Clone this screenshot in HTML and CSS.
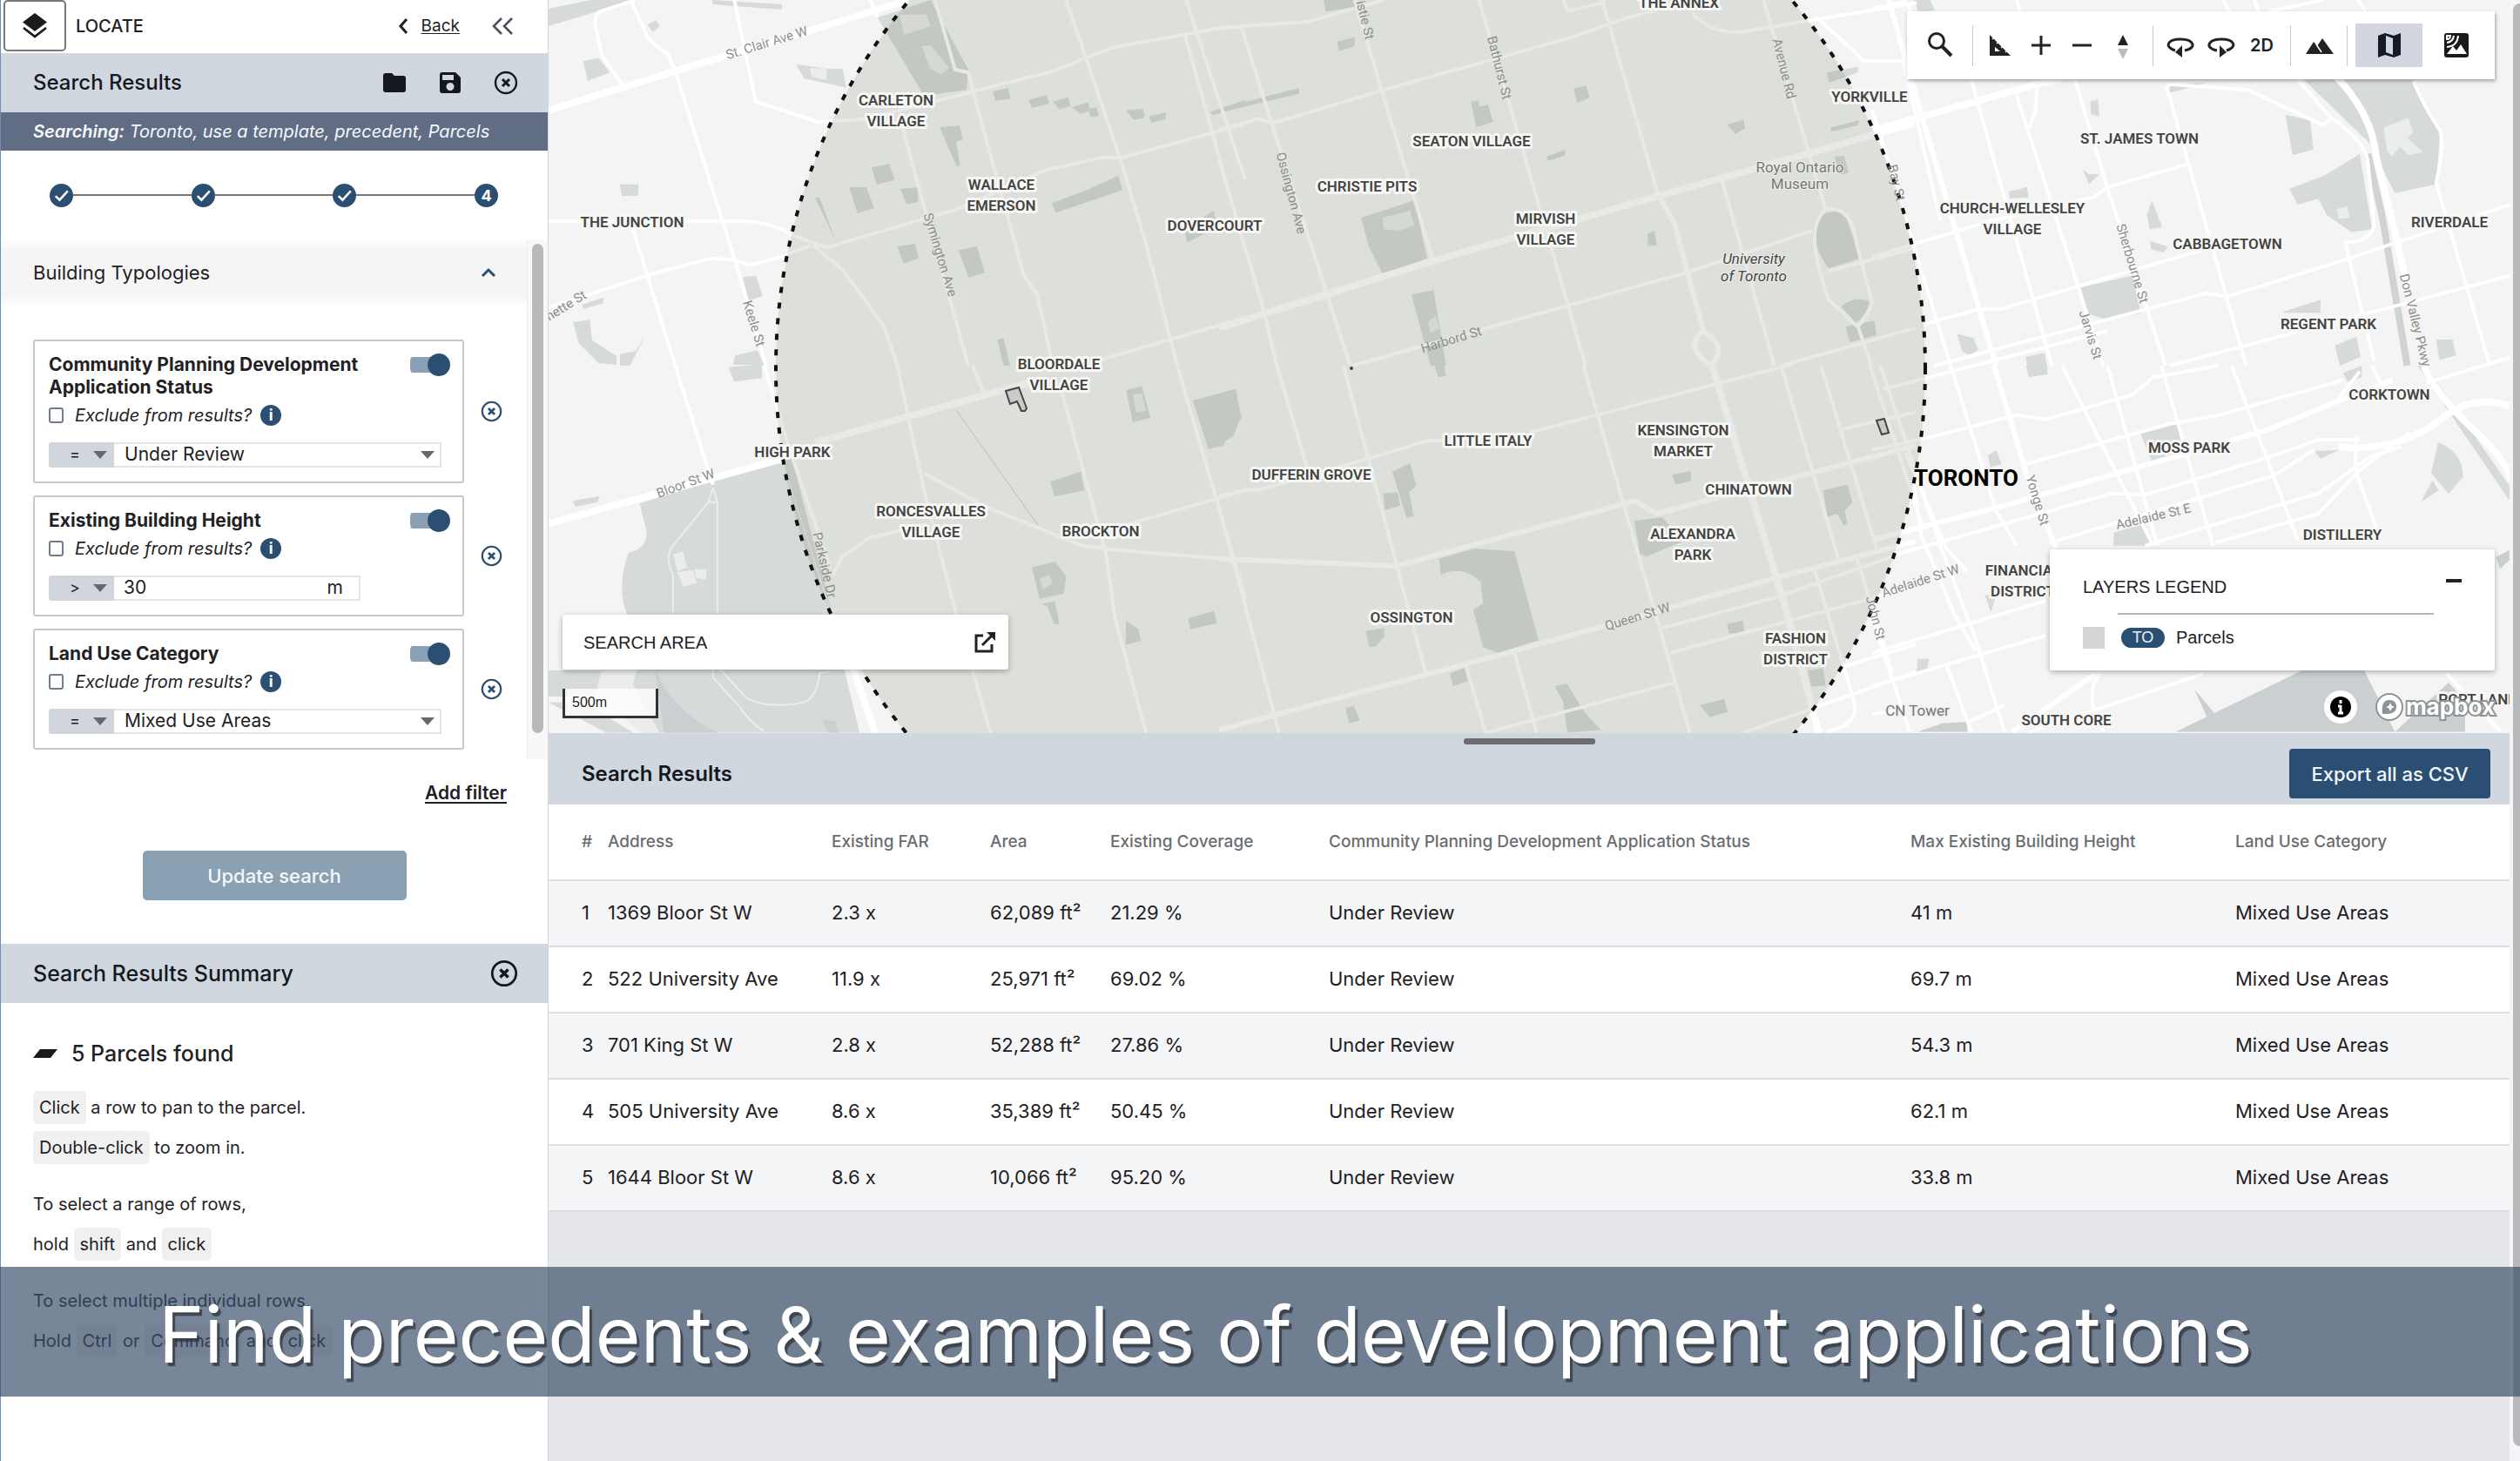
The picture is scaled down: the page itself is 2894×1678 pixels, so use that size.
FILE: index.html
```html
<!DOCTYPE html>
<html lang="en">
<head>
<meta charset="utf-8">
<title>Locate – Search Results</title>
<link rel="stylesheet" href="styles.css">
</head>
<body>
<svg class="defs" aria-hidden="true">
  <symbol id="close" viewBox="0 0 28 28"><circle cx="14" cy="14" r="12" fill="none" stroke="currentColor" stroke-width="2.4"/><path d="M10 10l8 8M18 10l-8 8" stroke="currentColor" stroke-width="3" fill="none"/></symbol>
  <symbol id="check" viewBox="0 0 26 26"><path d="M6.500 13.500l4.500 4.500 9-10" fill="none" stroke="#fff" stroke-width="2.400"/></symbol>
</svg>
<div class="app">
  <aside class="sidebar">
    <header class="brand">
      <button class="logo" aria-label="Layers"><svg viewBox="0 0 28 30"><path d="M14 0L28 10.500 14 21 0 10.500z" fill="#1b1b1b"/><path d="M1 17l13 10 13-10" fill="none" stroke="#1b1b1b" stroke-width="2.800"/></svg></button>
      <span class="brand-name">LOCATE</span>
      <a class="back" href="#back"><svg viewBox="0 0 12 20"><path d="M10 2L3 10l7 8" fill="none" stroke="#222" stroke-width="3"/></svg><span>Back</span></a>
      <button class="plain collapse" aria-label="Collapse panel"><svg viewBox="0 0 26 20"><path d="M11 1L2 10l9 9M23 1l-9 9 9 9" fill="none" stroke="#4a5260" stroke-width="2.600"/></svg></button>
    </header>
    <div class="bar">
      <h1 class="heading">Search Results</h1>
      <button class="plain" aria-label="Open folder"><svg class="i28" viewBox="0 0 28 28"><path d="M1 6q0-3 3-3h7l3 3h10q3 0 3 3v13q0 3-3 3H4q-3 0-3-3z" fill="#14171c"/></svg></button>
      <button class="plain" aria-label="Save search"><svg class="i28" viewBox="0 0 28 28"><path d="M2 5q0-3 3-3h15l6 6v15q0 3-3 3H5q-3 0-3-3zM5 5v6h13V5zM14 14a4.500 4.500 0 1 0 .01 0z" fill="#14171c" fill-rule="evenodd"/></svg></button>
      <button class="plain" aria-label="Close search"><svg class="i28"><use href="#close"/></svg></button>
    </div>
    <p class="searching"><strong>Searching:</strong> Toronto, use a template, precedent, Parcels</p>
    <ol class="steps">
      <li><svg><use href="#check"/></svg></li>
      <li><svg><use href="#check"/></svg></li>
      <li><svg><use href="#check"/></svg></li>
      <li>4</li>
    </ol>
    <div class="scroller">
      <div class="scroll-body">
        <button class="section"><span>Building Typologies</span><svg viewBox="0 0 18 12"><path d="M2 10l7-7 7 7" fill="none" stroke="#2b4f72" stroke-width="3"/></svg></button>
        <div class="filters">
          <div class="filter">
            <fieldset class="card">
              <div class="card-head"><h2>Community Planning Development Application Status</h2><input class="toggle" type="checkbox" role="switch" checked aria-label="Status filter on"></div>
              <div class="exclude"><input type="checkbox" id="ex1"><label for="ex1">Exclude from results?</label><span class="info">i</span></div>
              <div class="criteria"><span class="pick op"><select aria-label="Status operator"><option>=</option></select></span><span class="pick value"><select aria-label="Status"><option>Under Review</option></select></span></div>
            </fieldset>
            <button class="plain remove" aria-label="Remove status filter"><svg><use href="#close"/></svg></button>
          </div>
          <div class="filter">
            <fieldset class="card">
              <div class="card-head"><h2>Existing Building Height</h2><input class="toggle" type="checkbox" role="switch" checked aria-label="Height filter on"></div>
              <div class="exclude"><input type="checkbox" id="ex2"><label for="ex2">Exclude from results?</label><span class="info">i</span></div>
              <div class="criteria short"><span class="pick op"><select aria-label="Height operator"><option>&gt;</option></select></span><span class="number"><input type="text" value="30" id="height" aria-label="Height"><label for="height">m</label></span></div>
            </fieldset>
            <button class="plain remove" aria-label="Remove height filter"><svg><use href="#close"/></svg></button>
          </div>
          <div class="filter">
            <fieldset class="card">
              <div class="card-head"><h2>Land Use Category</h2><input class="toggle" type="checkbox" role="switch" checked aria-label="Land use filter on"></div>
              <div class="exclude"><input type="checkbox" id="ex3"><label for="ex3">Exclude from results?</label><span class="info">i</span></div>
              <div class="criteria"><span class="pick op"><select aria-label="Land use operator"><option>=</option></select></span><span class="pick value"><select aria-label="Land use"><option>Mixed Use Areas</option></select></span></div>
            </fieldset>
            <button class="plain remove" aria-label="Remove land use filter"><svg><use href="#close"/></svg></button>
          </div>
        </div>
      </div>
      <div class="track"><div class="thumb"></div></div>
    </div>
    <div class="actions">
      <a class="add" href="#add">Add filter</a>
      <button class="update">Update search</button>
    </div>
    <div class="bar">
      <h2 class="heading summary-title">Search Results Summary</h2>
      <button class="plain" aria-label="Close summary"><svg class="i32"><use href="#close"/></svg></button>
    </div>
    <section class="summary">
      <p class="found"><svg viewBox="0 0 28 10"><path d="M8 0h20l-8 10H0z" fill="#1b1b1b"/></svg>5 Parcels found</p>
      <p><kbd>Click</kbd> a row to pan to the parcel.<br><kbd>Double-click</kbd> to zoom in.</p>
      <p>To select a range of rows,<br>hold <kbd>shift</kbd> and <kbd>click</kbd></p>
      <p>To select multiple individual rows,<br>Hold <kbd>Ctrl</kbd> or <kbd>Command</kbd> and <kbd>click</kbd></p>
    </section>
  </aside>

  <main class="main">
    <section class="map" aria-label="Map">
      <svg class="canvas" viewBox="630 0 2252 842" preserveAspectRatio="xMidYMid slice">
        <rect x="0" y="-600" width="3600" height="2200" class="land"/>
        <!-- parks and water -->
        <g transform="translate(630 0) scale(.5102 .3333)" class="park">
          <path d="M0 30L95 0h100L0 90z M368 0l157 15v18l-155-18z M222 85l20-15 8 20-15 20z M78 210l35-10 25 50-50 28z M557 222l75 15 30 0 8 65-95-32z M160 635h42v40h-37z M75 1050l48-25v20l-45 20z M55 1110l38-8 5 70 55 55 0 30-40-5-45-70z M218 1155l-35 105h-22v-40l35-10z M437 955l30-5 15 70-32 15z M420 1225l50-18 15 50-70 0z"/>
          <path d="M740 60L860 0l85 240-5 70-95 20z M1000 315l35-12 4 38-33 6z M1080 345l40-18 8 30-40 15z M1135 350l35-15 5 30-25 12z M1178 370l36-18 6 28-22 12z M1215 375l18-5 5 30-18 3z M1300 380l38-5 4 30-25 8z M1352 400l38-12-2 22-32 14z M880 438l45-5 8 48-15 8 8 80-8 3z M727 577l40-12 12 55-40 16z M677 645h38l18 72-38 18z M792 650l38-4 2 50-26 8z M600 682l10-2 35 145z M785 850l40-10 8 50-34 18z M922 862l42-14 18 92-36 16z M1132 700l80-45 70-50 10 50-150 78z M1430 790l68-65 5 60-65 50z M1490 385l78-40v20l-72 32z M1010 1170l14-5 15 95h-15z"/>
          <path class="clearing" d="M790 50l60 0 10 40-60 30z M840 160l20-5 42 80-18 22-25-20z M588 235h38v40l-34-10z"/>
        </g>
        <g transform="translate(1400 0) scale(.5102 .3333)" class="park">
          <path d="M235 0h70v25l-65 15z M265 143l40-15v32l-35 16z M0 375l180-72v20L0 388z M567 350l18-4v22l20-8 12 60-38 18z M798 305l28-10 8 42-28 18z M737 540l42-24v20l-38 18z M1144 430l36-18 4 30-22 20z M1376 440l65-26-3 18-60 22z M1368 250l70-20v20l-65 35z M1385 540l22-4 10 60-18 5z M320 750l120-60 28 200-100 55-32-100z M433 1015l50-16 28 261h-35z M965 805l15-10 5 50-20 2z M1345 760q30-50 65-20l32 150-70 35q-40-80-27-165z M1400 1055q35-40 65-15-10 50-32 72z M1410 1125l65-20 5 50-60 25z"/>
          <path class="clearing" d="M368 750l62-25 10 50-30 20-40-5z M470 1110l18-25 8 50-20 10z"/>
        </g>
        <g transform="translate(2150 0) scale(.4745 .3333)" class="park">
          <path d="M100 0h40l12 35-40 5z M720 290l90-5-90 35z M1045 275h265l65 180-10 180-100 30-60-170z M1000 395l60 20 8 100-50 20z M1010 650l85-45 85-75 30 260-50 10-60-60-20-55-50 20z M528 350l18-8 4 60-20-8z M510 585l15 15 25 0-25 35z M665 740l12-48 25 90-30 8z M672 830l44 20-10 20-30-10z M505 990l125-40 20 130-85 20-45-20z M995 1075l90-42v45h-88z M1120 1190l52-30 10 70-50 30z M1365 1170l40 0 8 55-40 15z M205 1150l40 15 12 40-20 18-18-10z M330 660l45-15 3 35-45 4z M372 1230l45-14 6 44h-48z"/>
          <path class="clearing" d="M1238 440l60-35 12 50-15 20 38 50-35 10-20-30-20 35-12-20z M1125 720l25-10 5 40-25 5z"/>
          <path class="rail" d="M1200 530l35 220 60 510"/>
        </g>
        <g transform="translate(630 420) scale(.5102 .3333)" class="park">
          <path d="M405 5l75-10v48l-62 12z M55 465l60-15-5 20-50 16z M205 475l320-150 110 530L700 1265H210L180 1050l0-180q-30-100 0-225 50-20 38-90z M0 1050h215v90H0z M0 1160h80l110 105h-60z"/>
          <path d="M527 330l20-15 95 560z M1300 85l35-15 20 110-40 15z M1450 120l95-40 15 100-35 60-5 35-35 12z M1130 400l68-35 8 65-68 20z M1088 695l52-20 25 50-5 60-55 18z M1110 820l30-8 10 78-12 0-15-60z M1300 878l28 30 5 40-34 15z M1440 870l58-25 6 42-60 22z"/>
          <path class="water" d="M240 1050q40 140 140 215H260z M615 1220l30 5 10 40h-25z"/>
          <path class="clearing" d="M120 1040h80l-10 60 60 165h-40L105 1140z M280 650l22-10 10 55-22 12z M290 712l35-8 8 45-30 12z M328 702l28 0-2 35-22-5z M1315 100l20-5 10 60-22 8z M1105 735l22-15 8 30-22 22z"/>
        </g>
        <g transform="translate(1400 420) scale(.5102 .3333)" class="park">
          <path d="M0 100l38-20 10 100-15 60-33 35z M485 0h22l4 35-18 5z M390 365l40-30 14 80-16 20 10 85-16 5-22-110z M370 440l32-4 6 46-35 15z M495 665l80-35 90 10 54 305-90 45-35-20-22-130 22-20-5-75q-40-60-90-25z M1020 375l42-12v35l-35 12z M935 535l62-12 50 80-85 55-15-10z M1360 430l54-20 12 60-18 30 6 45-8 5-15-40-22 12z M1143 890l36-12 4 40-35 5z M1325 1050l35-8 5 60-32 4z M330 915l42-12v30l-20 35-14 0z M520 1060l32-18 8 45-34 18z M285 1180l18-8 14 50-24 10z M755 1105l28-10 40 100 36 60-75 10-10-110z M1082 1170l55-22 8 45-40 18z"/>
        </g>
        <g transform="translate(2150 420) scale(.4745 .3333)" class="park">
          <path d="M372 0h52v30l-45 10z M650 235l90-35 12 100-75 30z M585 575l75-30 14 75h-90z M1370 265q60 30 60 120l-35 55-42-70z M1328 470l28-75 15 35z M1140 25l45-25v40l-35 15z M1070 295l60-5-45 30z M280 310l20-20 14 50-28 10z M135 540l65-20v15l-60 25z M272 790l28 0-12 60z M110 1010l28 0-5 40-25 5z M1320 0h20l220 450-20 10z"/>
          <path class="water" d="M735 1262l310-215h145l75 215z M1265 1262l130-170 40 60v110z M780 1115l50 85-20 10z M110 1262l60-30 60-5v35z M1510 660l40-30v30l-30 40z"/>
        </g>
        <!-- streets -->
        <g transform="translate(630 0) scale(.5102 .3333)" class="road">
          <path class="wide" d="M0 380L285 245 590 105 810 0"/>
          <path d="M195 0l-80 40q-12 15-10 50l15 100 45 100M185 0l40 135 45 55 15 55L420 900l70 360M418 0l48 350 140 70 110-10 240-95 180-70 130-80 270-75M725 0l15 60M0 763h445q60 5 100 45l80 45 300-135 190-130 130-45h45l275-115M0 1060l230-115 135-55 50 5 40 18 70-28 65-40M190 790l95 470M595 845l70 90 90 190 30 135M795 430l55 310 95 520M870 0l45 240 30 10 20 120L1070 950l30 65 35 245M1165 0l120 540 60 300 70 420M1435 0l133 620M1432 120l136 740M1230 1245l338-150"/>
        </g>
        <g transform="translate(1400 0) scale(.5102 .3333)" class="road">
          <path class="wide" d="M0 1130l480-230L990 675l575-250"/>
          <path class="mid" d="M985 660l40 110 65 370q-45 55 15 120 45-60-15-120"/>
          <path d="M0 100l50-10 150-15L370 0M50 90l65 320 180 850M0 445l90-35 30 15L370 310 790 130l130-70L985 35M305 0l175 890M585 0l240 1260M775 0l10 38 85-30M862 0l125 665M1065 45q40 70 110 65l395-100M1225 0l140 720q60-10 70 120l35 200q-10 50-32 85l30 135M1345 60l80 110 25 40h118M1365 720q-40 60-15 200l20 110 70 100M0 550l95 490 35 220M300 1260l480-205 270-115 285-145M1130 610l120 650M1370 935l198-80M1265 1260l303-130"/>
        </g>
        <g transform="translate(2150 0) scale(.4745 .3333)" class="road">
          <path class="wide" d="M1120 260q90 130 100 280l50 290 25 160M0 450l400-160 60-20"/>
          <path class="mid" d="M40 0l80 400L300 1260"/>
          <path d="M0 30l80-25 20 50M0 210h75l90 550M350 0l10 50M0 380l190 880M240 275l195 985M350 330l210 930M400 290l-5 90-15 60M490 270l80 380 140 610M710 310l10-20 190 20 180 120 20-20M715 310l190 950M1030 275l80 130q90 90 90 160l15 200q0 70-70 70l10 60 60 350M1310 280q30 100 65 170 10 60-10 180l130 630M850 0l15 40M925 0l10 40M960 40l130-40M1175 0l20 40M0 885l290-125 245-80 35-35 195-80M130 1115l130-50h50l480-200 40-15M150 1260l660-250 50 12 290-130 420-200M720 1260l850-320"/>
        </g>
        <g transform="translate(630 420) scale(.5102 .3333)" class="road">
          <path class="wide" d="M0 545L245 440 530 320M600 265l210-90L1090 55M685 1040l50 225"/>
          <path d="M285 0l85 410M485 0l60 300 90 400M785 0l60 430 75 440 75 395M845 370l130 110 225 140 60 12 308 40M1150 60l105 590 20 220 70 395M955 0l25 95M1415 0l153 800M1250 570l318-140M640 720l20-60 60-65 130-50"/>
          <path class="thin" d="M370 420l-10 50-80 150q-20 40 0 100v130M370 420l10 50v380M360 470h20M385 1045l60 100q50 40 130 15 30-20 35-100l20-5M370 1045v30l60 100q20 50 55 85"/>
        </g>
        <g transform="translate(1400 420) scale(.5102 .3333)" class="road">
          <path class="wide" d="M1110 0l170 860 70 405"/>
          <path class="mid" d="M0 665l400 25 515-215 20-10 50 45 583-235M0 1255l660-270 585-250 323-130"/>
          <path d="M130 0l70 360M280 0l185 1060M820 0l240 1265M0 450l60-22h30l240-105 140-65h50M700 230l590-235M0 490l135 775M555 1030l45 235M665 990l50 275M1265 0l130 670M1355 0l125 630M1465 0l120 560M1400 220l168-60M1495 80l73-25M995 905l255-105 318-170M1015 990l553-230M600 1265l430-175M1180 1265l388-210M1340 700l90 460q10 80-60 100M1435 660l80 400M1400 1040l168-80"/>
        </g>
        <g transform="translate(2150 420) scale(.4745 .3333)" class="road">
          <path class="wide" d="M1335 0q30 100 120 220 100 130 100 220M1130 280q150 20 260-110 80-80 170-20"/>
          <path class="mid" d="M295 0l80 380 70 250M0 600l300-110 660-270 170-100 130-70M340 1262l200-200"/>
          <path d="M0 290l130-40 220-80 70 15 210-85 50-60L840 0M30 80l540-200M190 0l110 500 50 120M460 0l220 620M570 0l120 620M700 0l125 620M870 0l160 600M1210 0l40 120M20 0l150 640 80 300 70 320M80 300l100 330 50 80M370 340l350-140 120-30 300-120M60 650l520-210 80 5 300-130 120-60h100M430 610l540-230 100-90M660 620l420-180 130-130 70-30M830 610l250-100 100-150 120-130M1170 240v120l50 200M1180 20l-50 90M0 990l420-180M0 1105l420-175M180 1030l60 232M0 1200l50-10M230 1230l90-60M250 980l-50-120-80-270-20-180M0 870l90 390M550 1060q-40 80 10 200M380 1262l420-200M1390 1060l130 200M1340 60l230-100"/>
        </g>
        <!-- search radius -->
        <circle class="area" cx="1551" cy="423" r="660"/>
        <circle class="area-edge" cx="1551" cy="423" r="660"/>
        <g class="parcel"><path d="M1155 449l15-4 9 24-2 3-4 0-5-11-8 3z M2155 483l9-2 5 16-8 2z"/><circle cx="1552" cy="423" r="1"/></g>
        <path d="M1098 471l94 132" class="thinline"/>
        <g class="street">
          <text transform="translate(882 54) rotate(-17)">St. Clair Ave W</text>
          <text transform="translate(1075 294) rotate(73)">Symington Ave</text>
          <text transform="translate(861 373) rotate(73)">Keele St</text>
          <text transform="translate(645 360) rotate(-32)">Annette St</text>
          <text transform="translate(1560 13) rotate(76)">Christie St</text>
          <text transform="translate(1717 79) rotate(76)">Bathurst St</text>
          <text transform="translate(2044 80) rotate(76)">Avenue Rd</text>
          <text transform="translate(1478 223) rotate(75)">Ossington Ave</text>
          <text transform="translate(2173 211) rotate(76)">Bay St</text>
          <text transform="translate(1668 395) rotate(-17)">Harbord St</text>
          <text transform="translate(789 560) rotate(-20)">Bloor St W</text>
          <text transform="translate(942 650) rotate(77)">Parkside Dr</text>
          <text transform="translate(1882 713) rotate(-17)">Queen St W</text>
          <text transform="translate(2149 711) rotate(76)">John St</text>
          <text transform="translate(2207 672) rotate(-18)">Adelaide St W</text>
          <text transform="translate(2474 598) rotate(-13)">Adelaide St E</text>
          <text transform="translate(2335 576) rotate(73)">Yonge St</text>
          <text transform="translate(2396 386) rotate(73)">Jarvis St</text>
          <text transform="translate(2444 304) rotate(73)">Sherbourne St</text>
          <text transform="translate(2769 369) rotate(76)">Don Valley Pkwy</text>
        </g>
        <g class="place">
          <text x="1029" y="121">CARLETON<tspan x="1029" dy="24">VILLAGE</tspan></text>
          <text x="1150" y="218">WALLACE<tspan x="1150" dy="24">EMERSON</tspan></text>
          <text x="726" y="261">THE JUNCTION</text>
          <text x="1395" y="265">DOVERCOURT</text>
          <text x="1928" y="9">THE ANNEX</text>
          <text x="1690" y="168">SEATON VILLAGE</text>
          <text x="1570" y="220">CHRISTIE PITS</text>
          <text x="1775" y="257">MIRVISH<tspan x="1775" dy="24">VILLAGE</tspan></text>
          <text x="2147" y="117">YORKVILLE</text>
          <text x="2457" y="165">ST. JAMES TOWN</text>
          <text x="2311" y="245">CHURCH-WELLESLEY<tspan x="2311" dy="24">VILLAGE</tspan></text>
          <text x="2558" y="286">CABBAGETOWN</text>
          <text x="2813" y="261">RIVERDALE</text>
          <text x="2674" y="378">REGENT PARK</text>
          <text x="1216" y="424">BLOORDALE<tspan x="1216" dy="24">VILLAGE</tspan></text>
          <text x="910" y="525">HIGH PARK</text>
          <text x="1069" y="593">RONCESVALLES<tspan x="1069" dy="24">VILLAGE</tspan></text>
          <text x="1264" y="616">BROCKTON</text>
          <text x="1506" y="551">DUFFERIN GROVE</text>
          <text x="1709" y="512">LITTLE ITALY</text>
          <text x="1933" y="500">KENSINGTON<tspan x="1933" dy="24">MARKET</tspan></text>
          <text x="2008" y="568">CHINATOWN</text>
          <text x="1944" y="619">ALEXANDRA<tspan x="1944" dy="24">PARK</tspan></text>
          <text x="1621" y="715">OSSINGTON</text>
          <text x="2062" y="739">FASHION<tspan x="2062" dy="24">DISTRICT</tspan></text>
          <text x="2744" y="459">CORKTOWN</text>
          <text x="2514" y="520">MOSS PARK</text>
          <text x="2690" y="620">DISTILLERY</text>
          <text x="2323" y="661">FINANCIAL<tspan x="2323" dy="24">DISTRICT</tspan></text>
          <text x="2373" y="833">SOUTH CORE</text>
          <text x="2851" y="809">PORT LANDS</text>
        </g>
        <g class="poi">
          <text x="2067" y="198">Royal Ontario<tspan x="2067" dy="19">Museum</tspan></text>
          <text x="2202" y="822">CN Tower</text>
          <text class="campus" x="2014" y="303">University<tspan x="2014" dy="20">of Toronto</tspan></text>
        </g>
        <text class="city" x="2258" y="558">TORONTO</text>
      </svg>

      <div class="toolbar">
        <button class="tool first" aria-label="Search"><svg viewBox="0 0 32 32"><circle cx="12" cy="11" r="8.500" fill="none" stroke="#222" stroke-width="3"/><path d="M18 17l11 11" stroke="#222" stroke-width="4"/></svg></button>
        <div class="tools zooming">
          <button class="tool" aria-label="Measure"><svg viewBox="0 0 32 32"><path d="M4 4l24 24H4zM10 18v5h6z" fill="#222" fill-rule="evenodd"/><path d="M9 7l-2 2M14 12l-2 2M19 17l-2 2M24 22l-2 2" stroke="#fff" stroke-width="1.500"/></svg></button>
          <button class="tool" aria-label="Zoom in"><svg viewBox="0 0 32 32"><path d="M16 5v22M5 16h22" stroke="#222" stroke-width="3"/></svg></button>
          <button class="tool" aria-label="Zoom out"><svg viewBox="0 0 32 32"><path d="M5 16h22" stroke="#222" stroke-width="3"/></svg></button>
          <button class="tool" aria-label="Reset north"><svg viewBox="0 0 32 32"><path d="M10 16L16 4l6 12z" fill="#222"/><path d="M10 20l6 12 6-12z" fill="#bbb"/></svg></button>
        </div>
        <div class="tools">
          <button class="tool" aria-label="Rotate left"><svg viewBox="0 0 32 32"><path d="M10 22C-3 18 1 9 16 9s20 10 5 13" fill="none" stroke="#222" stroke-width="3"/><path d="M18 16v14l-8-6z" fill="#222"/></svg></button>
          <button class="tool" aria-label="Rotate right"><svg viewBox="0 0 32 32"><path d="M22 22C35 18 31 9 16 9s-20 10-5 13" fill="none" stroke="#222" stroke-width="3"/><path d="M14 16v14l8-6z" fill="#222"/></svg></button>
          <button class="tool">2D</button>
        </div>
        <button class="tool terrain" aria-label="Terrain"><svg viewBox="0 0 32 32"><path d="M0 26l9-14 4 5 6-9 13 18z" fill="#222"/><path d="M12 15l6 9" stroke="#fff" stroke-width="1.500"/></svg></button>
        <div class="tools last">
          <button class="tool basemap active" aria-label="Street map"><svg viewBox="0 0 32 32"><path d="M3 5l8-3 10 3 8-3v25l-8 3-10-3-8 3zM12 5v19l8 3V8z" fill="#141a26" fill-rule="evenodd"/></svg></button>
          <button class="tool basemap" aria-label="Satellite map"><svg viewBox="0 0 32 32"><rect x="2" y="2" width="28" height="28" rx="3" fill="#1a1a1a"/><path d="M5 26l7-9 4 5 5-7 7 11z" fill="#fff"/><path d="M5 5h4q0 4-4 4zM5 13q7-1 8-8M5 18q12-1 13-13" fill="none" stroke="#fff" stroke-width="2"/></svg></button>
        </div>
      </div>

      <div class="corner left">
        <div class="panel area-panel"><span>SEARCH AREA</span><button class="plain" aria-label="Open search area"><svg viewBox="0 0 24 24"><path d="M10 4H2v18h18v-8" fill="none" stroke="#222" stroke-width="3"/><path d="M9 15L21 3" stroke="#222" stroke-width="3"/><path d="M14 0h10v10z" fill="#222"/></svg></button></div>
        <div class="scale">500m</div>
      </div>
      <div class="corner right">
        <div class="panel legend">
          <div class="legend-head"><span>LAYERS LEGEND</span><button class="plain minimise" aria-label="Minimise legend"></button></div>
          <hr>
          <div class="legend-row"><span class="swatch"></span><span class="pill">TO</span><span>Parcels</span></div>
        </div>
        <div class="credits">
          <button class="plain about" aria-label="Map information"><svg viewBox="0 0 38 38"><circle cx="19" cy="19" r="19" fill="#fff"/><circle cx="19" cy="19" r="12" fill="#000"/><path d="M19 11v4M19 17v10M16 18h3M16 26h6" stroke="#fff" stroke-width="3"/></svg></button>
          <a class="mapbox" href="#mapbox"><svg viewBox="0 0 34 34"><circle cx="17" cy="17" r="15" fill="#fff" stroke="#8d9496" stroke-width="2"/><path d="M9 25q-2-16 8-16 8 0 8 8 0 9-16 8z" fill="#8d9496"/><path d="M18 12l1.500 3.500L23 17l-3.500 1.500L18 22l-1.500-3.500L13 17l3.500-1.500z" fill="#fff"/></svg><span>mapbox</span></a>
        </div>
      </div>
    </section>

    <section class="results">
      <div class="grip"></div>
      <header class="results-head"><h2 class="heading">Search Results</h2><button class="export">Export all as CSV</button></header>
      <table>
        <colgroup><col class="c-num"><col class="c-addr"><col class="c-far"><col class="c-area"><col class="c-cov"><col class="c-status"><col class="c-height"><col></colgroup>
        <thead><tr><th>#</th><th>Address</th><th>Existing FAR</th><th>Area</th><th>Existing Coverage</th><th>Community Planning Development Application Status</th><th>Max Existing Building Height</th><th>Land Use Category</th></tr></thead>
        <tbody>
          <tr><td>1</td><td>1369 Bloor St W</td><td>2.3 x</td><td>62,089 ft²</td><td>21.29 %</td><td>Under Review</td><td>41 m</td><td>Mixed Use Areas</td></tr>
          <tr><td>2</td><td>522 University Ave</td><td>11.9 x</td><td>25,971 ft²</td><td>69.02 %</td><td>Under Review</td><td>69.7 m</td><td>Mixed Use Areas</td></tr>
          <tr><td>3</td><td>701 King St W</td><td>2.8 x</td><td>52,288 ft²</td><td>27.86 %</td><td>Under Review</td><td>54.3 m</td><td>Mixed Use Areas</td></tr>
          <tr><td>4</td><td>505 University Ave</td><td>8.6 x</td><td>35,389 ft²</td><td>50.45 %</td><td>Under Review</td><td>62.1 m</td><td>Mixed Use Areas</td></tr>
          <tr><td>5</td><td>1644 Bloor St W</td><td>8.6 x</td><td>10,066 ft²</td><td>95.20 %</td><td>Under Review</td><td>33.8 m</td><td>Mixed Use Areas</td></tr>
        </tbody>
      </table>
    </section>
  </main>
  <div class="page-scroll"><div class="page-thumb"></div></div>
</div>
<div class="caption">Find precedents &amp; examples of development applications</div>
</body>
</html>
```
FILE: styles.css
```css
* { box-sizing: border-box; }

body {
  margin: 0;
  font: 22px/26px Inter, "Liberation Sans", sans-serif;
  color: #1f2124;
  background: #fff;
}

h1, h2, p, ol, fieldset { margin: 0; padding: 0; }
button, input, select { font: inherit; color: inherit; }
button { cursor: pointer; }
svg { display: block; }

.defs { position: absolute; width: 0; height: 0; }
.plain { border: 0; background: none; padding: 0; }
.app { display: flex; min-height: 100vh; position: relative; }

/* ---------- sidebar ---------- */
.sidebar {
  width: 630px;
  flex: none;
  display: flex;
  flex-direction: column;
  border-left: 1px solid #6f8fb8;
  border-right: 1px solid #d5d7da;
}

.brand { display: flex; align-items: center; height: 61px; padding: 0 38px 2px 3px; }
.logo {
  width: 72px;
  height: 59px;
  align-self: flex-start;
  display: grid;
  place-items: center;
  background: #fff;
  border: 2px solid #777;
  border-radius: 5px;
}
.logo svg { width: 28px; height: 30px; }
.brand-name { margin-left: 11px; font-size: 20px; font-weight: 500; }
.back { display: flex; align-items: center; gap: 15px; margin-left: auto; font-size: 19px; color: inherit; text-underline-offset: 2px; }
.back svg { width: 12px; height: 20px; }
.collapse { margin-left: 37px; }
.collapse svg { width: 26px; height: 20px; }

.bar {
  display: flex;
  align-items: center;
  gap: 36px;
  height: 68px;
  padding: 0 34px 0 37px;
  background: #d1d7df;
  color: #14181f;
}
.heading { margin: 0 auto 0 0; font-size: 24px; line-height: 30px; font-weight: 500; }
.i28 { width: 28px; height: 28px; }
.i32 { width: 32px; height: 32px; }
.searching {
  height: 44px;
  padding-left: 37px;
  font-size: 20px;
  line-height: 44px;
  font-style: italic;
  color: #f6f9fc;
  background: #606d84;
}
.searching strong { font-weight: 600; }

.steps {
  display: flex;
  justify-content: space-between;
  align-items: center;
  height: 102px;
  padding: 0 57px 0 56px;
  list-style: none;
  background: linear-gradient(#777, #777) center / 488px 2px no-repeat;
}
.steps li {
  width: 27px;
  height: 27px;
  border-radius: 50%;
  background: #2b4f72;
  color: #fff;
  font-size: 18px;
  line-height: 27px;
  font-weight: 700;
  text-align: center;
}
.steps svg { width: 27px; height: 27px; }

.scroller { display: flex; height: 597px; }
.scroll-body { flex: 1; }
.track { width: 24px; padding: 5px; background: #f8f8f8; border-left: 1px solid #eee; }
.thumb { width: 13px; height: 562px; border-radius: 7px; background: #b9b9b9; }
.section {
  display: flex;
  justify-content: space-between;
  align-items: center;
  width: 100%;
  height: 76px;
  padding: 0 35px 0 37px;
  border: 0;
  font-size: 22px;
  background: linear-gradient(#fdfdfd, #f5f5f5 12px, #f5f5f5 64px, #fdfdfd);
}
.section svg { width: 18px; height: 12px; }

.filters { display: flex; flex-direction: column; gap: 14px; padding: 39px 28px 0 37px; }
.filter { display: flex; align-items: center; justify-content: space-between; }
.card { width: 495px; padding: 14px 14px 16px 16px; border: 2px solid #c6c9cc; border-radius: 3px; }
.card-head { display: flex; justify-content: space-between; align-items: flex-start; }
.card h2 { width: 380px; font-size: 21px; line-height: 26px; font-weight: 700; }
.remove svg { width: 25px; height: 25px; color: #2b4f72; }

.toggle {
  appearance: none;
  position: relative;
  width: 46px;
  height: 26px;
  margin: 0;
  background: linear-gradient(#8aa0b5, #8aa0b5) left center / 36px 18px no-repeat;
  border-radius: 9px;
}
.toggle::after {
  content: "";
  position: absolute;
  right: 0;
  top: 0;
  width: 26px;
  height: 26px;
  border-radius: 50%;
  background: #2b4f72;
}

.exclude { display: flex; align-items: center; gap: 13px; height: 38px; font-size: 20px; font-style: italic; }
.exclude input { appearance: none; width: 17px; height: 18px; margin: 0; border: 2px solid #6b7d90; border-radius: 3px; }
.info {
  width: 24px;
  height: 24px;
  margin-left: -3px;
  border-radius: 50%;
  background: #2b4f72;
  color: #fff;
  font: 700 18px/24px Inter, sans-serif;
  text-align: center;
}

.criteria { display: flex; height: 29px; width: 451px; margin-top: 12px; font-size: 21px; }
.criteria.short { width: 358px; }
.pick { position: relative; display: flex; }
.pick::after {
  content: "";
  position: absolute;
  right: 8px;
  top: 10px;
  border: 8px solid transparent;
  border-top: 9px solid #66696c;
  border-bottom: 0;
}
.pick select { appearance: none; width: 100%; height: 100%; border: 0; background: none; padding: 0 0 2px 12px; line-height: 24px; }
.value::after { right: 6px; top: 8px; }
.op { flex: none; width: 75px; background: #d1d6dc; border-radius: 3px 0 0 3px; }
.op select { padding-left: 24px; font-size: 18px; }
.value, .number { flex: 1; min-width: 0; border: 2px solid #e2e4e7; border-left: 0; }
.number { display: flex; align-items: center; padding: 0 18px 2px 11px; }
.number input { flex: 1; min-width: 0; height: 24px; border: 0; padding: 0; background: none; }

.actions { display: flex; flex-direction: column; align-items: center; height: 212px; padding-top: 26px; }
.add { align-self: flex-end; margin-right: 47px; font-size: 21px; font-weight: 600; color: inherit; text-underline-offset: 3px; }
.update {
  width: 303px;
  height: 57px;
  margin-top: 53px;
  border: 0;
  border-radius: 5px;
  background: #8aa1b4;
  color: #f4f8fb;
  font-weight: 500;
}
.summary-title { font-size: 25px; }

.summary { padding: 40px 37px 0; font-size: 20px; line-height: 46px; }
.summary p { margin-bottom: 19px; }
.summary .found { display: flex; align-items: center; gap: 16px; height: 36px; margin-bottom: 21px; font-size: 25px; font-weight: 500; }
.found svg { width: 28px; height: 10px; }
kbd { padding: 7px; border-radius: 5px; background: #f1f0f1; font: inherit; }

/* ---------- map ---------- */
.main { flex: 1; min-width: 0; display: grid; grid-template-rows: 842fr 836fr; }
.map { position: relative; overflow: hidden; background: #f3f4f3; }
.canvas { position: absolute; inset: 0; width: 100%; height: 100%; }
.land { fill: #f3f4f3; }
.park path { fill: #d6dad8; }
.park .water { fill: #cad0d2; }
.park .clearing { fill: #eaedea; }
.park .rail { fill: none; stroke: #d0d3d3; stroke-width: 8px; vector-effect: non-scaling-stroke; }
.road path { fill: none; stroke: #fff; stroke-width: 4px; stroke-linejoin: round; vector-effect: non-scaling-stroke; }
.road .mid { stroke-width: 6px; }
.road .wide { stroke-width: 8px; }
.road .thin { stroke: #eaeeec; stroke-width: 2px; }
.area { fill: rgba(64, 72, 40, .12); }
.area-edge { fill: none; stroke: #111; stroke-width: 4px; stroke-dasharray: 7 11; }
.parcel { fill: #c9cbc8; stroke: #444; stroke-width: 2px; }
.thinline { stroke: #b9bcb7; stroke-width: 1px; }
.canvas text {
  text-anchor: middle;
  font-family: Roboto, "Liberation Sans", sans-serif;
  paint-order: stroke;
  stroke-linejoin: round;
}
.street text { font-size: 15px; fill: #8b8e8b; }
.place text { font-size: 17px; font-weight: 600; fill: #444; stroke: #f7f8f5; stroke-width: 6px; }
.poi text { font-size: 17px; fill: #777; stroke: #ecefea; stroke-width: 2px; }
.poi .campus { font-style: italic; fill: #444; }
.canvas .city { font-size: 26px; font-weight: 700; fill: #000; stroke: #f7f8f5; stroke-width: 2px; }

.toolbar {
  position: absolute;
  top: 13px;
  right: 17px;
  display: flex;
  height: 78px;
  background: #fff;
  box-shadow: 1px 2px 4px rgba(0, 0, 0, .35);
}
.tools { display: flex; align-items: center; padding: 0 10px 0 7px; }
.toolbar > .zooming { padding: 0 12px 0 7px; }
.toolbar > * { background: linear-gradient(#c8c8c8, #c8c8c8) right center / 1px 47px no-repeat; }
.toolbar > .last { padding: 0 6px 0 9px; background: none; }
.tool { display: grid; place-items: center; width: 47px; height: 78px; padding: 0; border: 0; background-color: transparent; font-size: 20px; font-weight: 600; }
.tool svg { width: 32px; height: 32px; }
.tool.first { width: 76px; }
.tool.terrain { width: 65px; }
.tool.basemap { width: 77px; height: 50px; }
.tool.active { background: #d1d6df; }

.corner { position: absolute; bottom: 17px; display: flex; flex-direction: column; }
.corner.left { left: 16px; gap: 22px; align-items: flex-start; }
.corner.right { right: 17px; bottom: 11px; gap: 23px; align-items: flex-end; }
.panel { background: #fff; border-radius: 3px; box-shadow: 0 2px 6px rgba(0, 0, 0, .3); font: 20px/26px "Liberation Sans", sans-serif; }
.area-panel { display: flex; align-items: center; justify-content: space-between; width: 512px; height: 63px; padding: 0 15px 0 24px; }
.area-panel svg { width: 24px; height: 24px; }
.scale { width: 110px; height: 34px; padding-left: 8px; border: 3px solid #333; border-top: 0; background: rgba(255, 255, 255, .75); font: 16px/32px "Liberation Sans", sans-serif; }
.legend { width: 511px; height: 139px; padding: 30px 38px 0; }
.legend-head { display: flex; justify-content: space-between; }
.minimise { width: 18px; height: 4px; margin-top: 4px; background: #222; }
.legend hr { height: 2px; margin: 17px 32px 13px 40px; border: 0; background: #b5b5b5; }
.legend-row { display: flex; align-items: center; }
.swatch { width: 25px; height: 25px; background: #d6d6d6; }
.pill { width: 50px; height: 23px; margin: 0 13px 0 19px; border-radius: 12px; background: #2b4f72; color: #e8f0f8; font-size: 18px; line-height: 23px; text-align: center; }
.credits { display: flex; align-items: center; gap: 20px; }
.about svg { width: 38px; height: 38px; }
.mapbox { display: flex; align-items: center; gap: 2px; color: #fff; font-size: 26px; font-weight: 700; line-height: 34px; text-decoration: none; }
.mapbox svg { width: 34px; height: 34px; }
.mapbox span { -webkit-text-stroke: 4px #8d9496; paint-order: stroke; }

/* ---------- results ---------- */
.results { position: relative; background: #e5e6ea; }
.grip { position: absolute; top: 6px; left: 50%; width: 151px; height: 7px; margin-left: -75px; border-radius: 3px; background: #6a6c70; }
.results-head { display: flex; align-items: center; height: 82px; padding: 11px 22px 0 38px; background: #d1d7df; color: #14181f; }
.results-head .heading { font-weight: 600; }
.export { width: 231px; height: 57px; border: 0; border-radius: 4px; background: #2b4f72; color: #f1f7fc; font-weight: 500; }

table { width: 100%; table-layout: fixed; border-collapse: collapse; background: #fff; }
.c-num { width: 68px; }
.c-addr { width: 257px; }
.c-far { width: 182px; }
.c-area { width: 138px; }
.c-cov { width: 251px; }
.c-status { width: 668px; }
.c-height { width: 373px; }
th, td { padding: 0; text-align: left; white-space: nowrap; }
th:first-child, td:first-child { padding-left: 38px; }
th { height: 87px; font-size: 19px; font-weight: 500; color: #6a6d70; }
td { height: 76px; padding-bottom: 2px; border-top: 2px solid #dcdee1; font-size: 22px; }
tbody tr:last-child td { border-bottom: 2px solid #dcdee1; }
tbody tr:nth-child(odd) { background: #f4f5f6; }

.page-scroll { width: 12px; flex: none; padding: 4px 0 0 4px; background: #f4f5f7; }
.page-thumb { height: 99%; border-radius: 8px 0 0 8px; background: #b9b9bb; }

/* ---------- caption ---------- */
.caption {
  position: absolute;
  left: 0;
  right: 0;
  bottom: 74px;
  height: 149px;
  padding-left: 182px;
  background: rgba(56, 77, 104, .68);
  color: #fff;
  font-size: 89px;
  line-height: 156px;
  white-space: nowrap;
  text-shadow: 3px 4px 1px rgba(50, 55, 62, .8);
}
```
